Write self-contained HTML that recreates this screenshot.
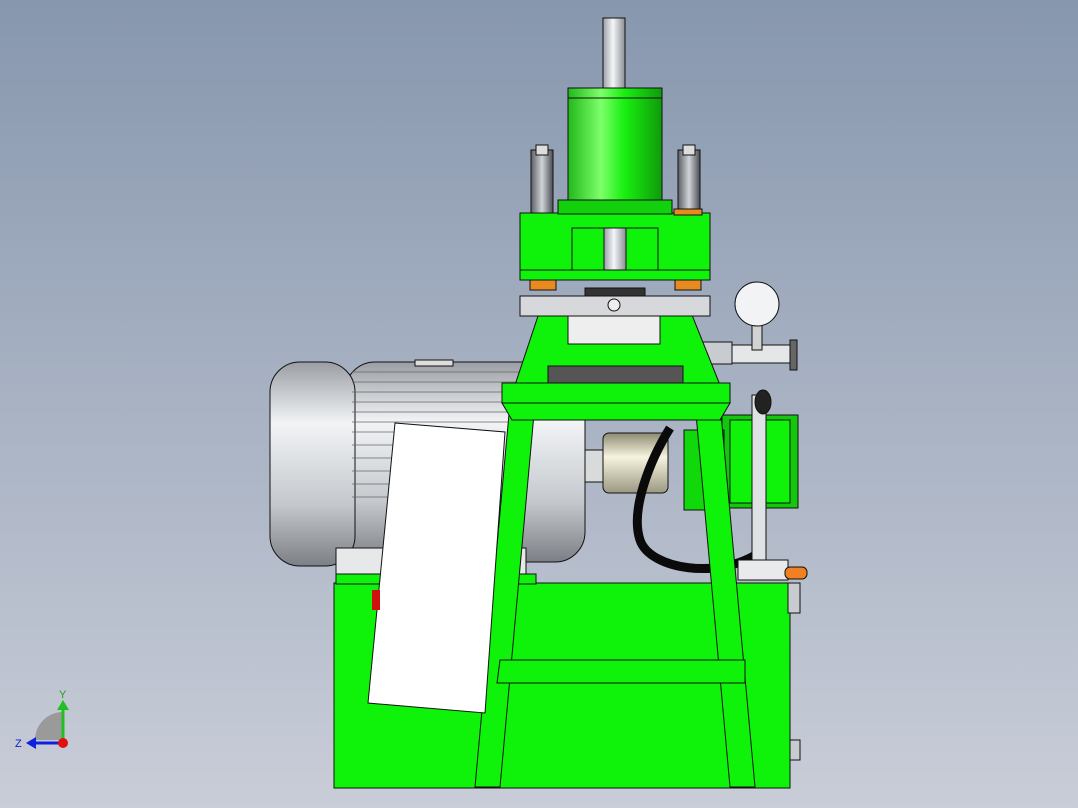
<!DOCTYPE html>
<html><head><style>
html,body{margin:0;padding:0;width:1078px;height:808px;overflow:hidden}
body{background:linear-gradient(#8797ae,#c9cdd8)}
svg{position:absolute;left:0;top:0}
</style></head><body>
<svg width="1078" height="808" viewBox="0 0 1078 808">
<defs>
<linearGradient id="rod" x1="0" x2="1"><stop offset="0" stop-color="#9a9ea4"/><stop offset=".45" stop-color="#f4f6f8"/><stop offset="1" stop-color="#8a8e94"/></linearGradient>
<linearGradient id="cyl" x1="0" x2="1"><stop offset="0" stop-color="#22b81a"/><stop offset=".35" stop-color="#7dff6a"/><stop offset=".6" stop-color="#18f010"/><stop offset="1" stop-color="#109a0a"/></linearGradient>
<linearGradient id="mot" x1="0" x2="0" y1="0" y2="1"><stop offset="0" stop-color="#9a9ea4"/><stop offset=".3" stop-color="#f2f4f6"/><stop offset=".7" stop-color="#c4c8cc"/><stop offset="1" stop-color="#7c8086"/></linearGradient>
<linearGradient id="post" x1="0" x2="1"><stop offset="0" stop-color="#5a5e62"/><stop offset=".5" stop-color="#d0d4d8"/><stop offset="1" stop-color="#4a4e52"/></linearGradient>
<linearGradient id="cup" x1="0" x2="0" y1="0" y2="1"><stop offset="0" stop-color="#8c8a70"/><stop offset=".4" stop-color="#f6f4e0"/><stop offset="1" stop-color="#9a9880"/></linearGradient>
</defs>
<g stroke="#111" stroke-width="1">
<!-- tank -->
<rect x="334" y="583" width="456" height="205" fill="#0ff20a"/>
<rect x="788" y="583" width="12" height="30" fill="#c8ccd0"/>
<rect x="790" y="740" width="10" height="20" fill="#c8ccd0"/>
<!-- motor -->
<rect x="345" y="362" width="240" height="200" rx="30" fill="url(#mot)"/>
<rect x="270" y="362" width="85" height="204" rx="30" fill="url(#mot)"/>
<g stroke="#666" stroke-width=".8">
<line x1="352" y1="372" x2="520" y2="372"/><line x1="352" y1="382" x2="520" y2="382"/><line x1="352" y1="392" x2="520" y2="392"/><line x1="352" y1="402" x2="520" y2="402"/><line x1="352" y1="412" x2="520" y2="412"/><line x1="352" y1="422" x2="520" y2="422"/><line x1="352" y1="432" x2="395" y2="432"/><line x1="352" y1="445" x2="395" y2="445"/><line x1="352" y1="458" x2="395" y2="458"/><line x1="352" y1="471" x2="395" y2="471"/><line x1="352" y1="484" x2="395" y2="484"/><line x1="352" y1="497" x2="395" y2="497"/>
</g>
<rect x="415" y="360" width="38" height="6" fill="#ddd"/>
<rect x="336" y="548" width="190" height="28" fill="#e6e8ea"/>
<rect x="336" y="574" width="200" height="10" fill="#0ff20a"/>
<!-- coupling -->
<rect x="585" y="450" width="20" height="32" fill="#d8dadc"/>
<rect x="603" y="433" width="65" height="60" rx="6" fill="url(#cup)"/>
<!-- right box -->
<rect x="722" y="415" width="76" height="93" fill="#12c80c"/>
<rect x="730" y="420" width="60" height="83" fill="#0ff20a"/>
<rect x="684" y="430" width="40" height="80" fill="#10d80a"/>
<!-- hose -->
<path d="M670 428 C650 460 630 510 640 540 C650 570 720 580 760 552" fill="none" stroke="#0a0a0a" stroke-width="9"/>
<!-- valve rod -->
<rect x="752" y="395" width="14" height="185" fill="#dfe2e4"/>
<ellipse cx="763" cy="402" rx="8" ry="12" fill="#222"/>
<rect x="738" y="560" width="50" height="20" fill="#e8eaec"/>
<rect x="785" y="567" width="22" height="12" rx="5" fill="#f08020"/>
<!-- gauge -->
<rect x="730" y="345" width="60" height="18" fill="#e4e6e8"/>
<rect x="752" y="325" width="10" height="25" fill="#d0d2d4"/>
<circle cx="757" cy="304" r="22" fill="#f2f3f4"/>
<rect x="790" y="340" width="7" height="30" fill="#666"/>
<rect x="700" y="342" width="32" height="22" fill="#c8ccd0"/>
<!-- legs -->
<polygon points="510,403 535,403 500,787 475,787" fill="#0ff20a"/>
<polygon points="695,403 720,403 755,787 730,787" fill="#0ff20a"/>
<polygon points="500,660 745,660 745,683 497,683" fill="#0ff20a"/>
<line x1="512" y1="420" x2="722" y2="420"/>
<!-- white panel -->
<polygon points="395,423 505,432 485,713 368,703" fill="#fff"/>
<rect x="372" y="590" width="8" height="20" fill="#d01010" stroke="none"/>
<!-- frame -->
<polygon points="540,310 690,310 720,385 515,385" fill="#0ff20a"/>
<rect x="568" y="312" width="92" height="32" fill="#eeeeee"/>
<rect x="548" y="366" width="135" height="17" fill="#555"/>
<rect x="502" y="383" width="228" height="20" fill="#0ff20a"/>
<polygon points="502,403 730,403 720,420 512,420" fill="#0ff20a"/>
<!-- plate -->
<rect x="520" y="296" width="190" height="20" fill="#d6d8dc"/>
<circle cx="614" cy="305" r="6" fill="#eee"/>
<rect x="585" y="288" width="60" height="8" fill="#333"/>
<!-- nuts -->
<rect x="530" y="280" width="26" height="10" fill="#e88a20"/>
<rect x="675" y="280" width="26" height="10" fill="#e88a20"/>
<!-- upper block -->
<rect x="520" y="213" width="190" height="67" fill="#0ff20a"/>
<rect x="572" y="228" width="86" height="42" fill="#0ff20a"/>
<rect x="604" y="228" width="22" height="42" fill="url(#rod)"/>
<line x1="520" y1="270" x2="710" y2="270"/>
<!-- posts -->
<rect x="531" y="150" width="22" height="63" fill="url(#post)"/>
<rect x="536" y="145" width="12" height="10" fill="#ddd"/>
<rect x="678" y="150" width="22" height="63" fill="url(#post)"/>
<rect x="683" y="145" width="12" height="10" fill="#ddd"/>
<rect x="674" y="209" width="28" height="6" fill="#e88a20"/>
<!-- rod & cylinder -->
<rect x="603" y="18" width="22" height="75" fill="url(#rod)"/>
<rect x="568" y="88" width="94" height="115" fill="url(#cyl)"/>
<line x1="568" y1="98" x2="662" y2="98"/>
<rect x="558" y="200" width="114" height="14" fill="#12d00c"/>
</g>
<!-- triad -->
<path d="M35 740 A28 28 0 0 1 63 712 L63 740 Z" fill="#9a9a9a"/>
<line x1="63" y1="742" x2="63" y2="708" stroke="#20c020" stroke-width="3"/>
<polygon points="57,710 69,710 63,700" fill="#20c020"/>
<line x1="63" y1="743" x2="34" y2="743" stroke="#1020e0" stroke-width="3"/>
<polygon points="36,737 36,749 26,743" fill="#1020e0"/>
<circle cx="63" cy="743" r="5" fill="#e01010"/>
<text x="59" y="698" font-family="Liberation Sans,sans-serif" font-size="11" fill="#20a020">Y</text>
<text x="15" y="747" font-family="Liberation Sans,sans-serif" font-size="11" fill="#1020c0">Z</text>
</svg>
</body></html>
